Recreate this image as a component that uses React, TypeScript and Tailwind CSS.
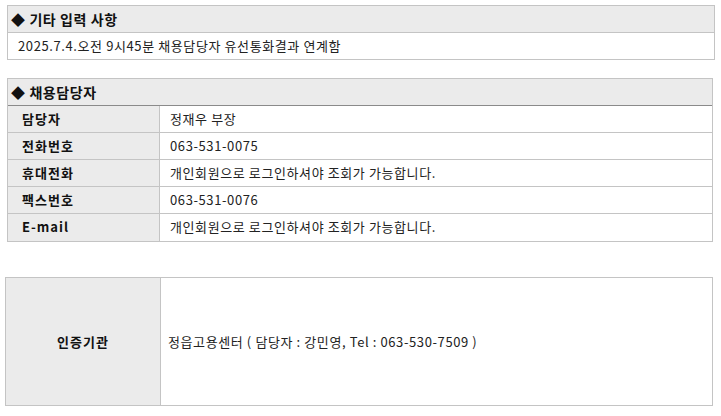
const font = { fontFamily: '"Noto Sans CJK KR", "Noto Sans", sans-serif' };

const contactRows = [
	{ label: "담당자", value: "정재우 부장" },
	{ label: "전화번호", value: "063-531-0075" },
	{ label: "휴대전화", value: "개인회원으로 로그인하셔야 조회가 가능합니다." },
	{ label: "팩스번호", value: "063-531-0076" },
	{ label: "E-mail", value: "개인회원으로 로그인하셔야 조회가 가능합니다." },
];

export default function App() {
	return (
		<div className="w-[721px] h-[416px] bg-white text-[13px] tracking-[0.6px] text-[#222] pt-[5px]" style={font}>
			{/* 기타 입력 사항 */}
			<div className="ml-[7px] w-[708px] border border-[#c4c4c4]">
				<div className="h-[27px] bg-[#ebebeb] border-b border-[#c4c4c4] flex items-center pl-[3px] text-[14px] tracking-[0.6px] font-bold text-[#111]">
					◆ 기타 입력 사항
				</div>
				<div className="h-[26px] flex items-center pl-[10px] pb-[1px]">
					2025.7.4.오전 9시45분 채용담당자 유선통화결과 연계함
				</div>
			</div>

			{/* 채용담당자 */}
			<div className="ml-[7px] mt-[18px] w-[706px] border border-[#c4c4c4]">
				<div className="h-[27px] bg-[#ebebeb] border-b border-[#8a8a8a] flex items-center pl-[3px] text-[14px] tracking-[0.6px] font-bold text-[#111]">
					◆ 채용담당자
				</div>
				{contactRows.map((row, i) => (
					<div
						key={row.label}
						className={`flex h-[27px] ${i < contactRows.length - 1 ? "border-b border-[#c4c4c4]" : ""}`}
					>
						<div className="w-[152px] bg-[#ebebeb] border-r border-[#c4c4c4] flex items-center pl-[14px] pb-[1px] font-bold tracking-[1px] text-[#111]">
							{row.label}
						</div>
						<div className="flex-1 flex items-center pl-[10px] pb-[1px]">{row.value}</div>
					</div>
				))}
			</div>

			{/* 인증기관 */}
			<div className="ml-[5px] mt-[35px] w-[708px] h-[129px] border border-[#c4c4c4] flex">
				<div className="w-[155px] bg-[#ebebeb] border-r border-[#c4c4c4] flex items-center justify-center font-bold tracking-[1px] text-[#111]">
					인증기관
				</div>
				<div className="flex-1 flex items-center pl-[7px]">
					정읍고용센터 ( 담당자 : 강민영, Tel : 063-530-7509 )
				</div>
			</div>
		</div>
	);
}
